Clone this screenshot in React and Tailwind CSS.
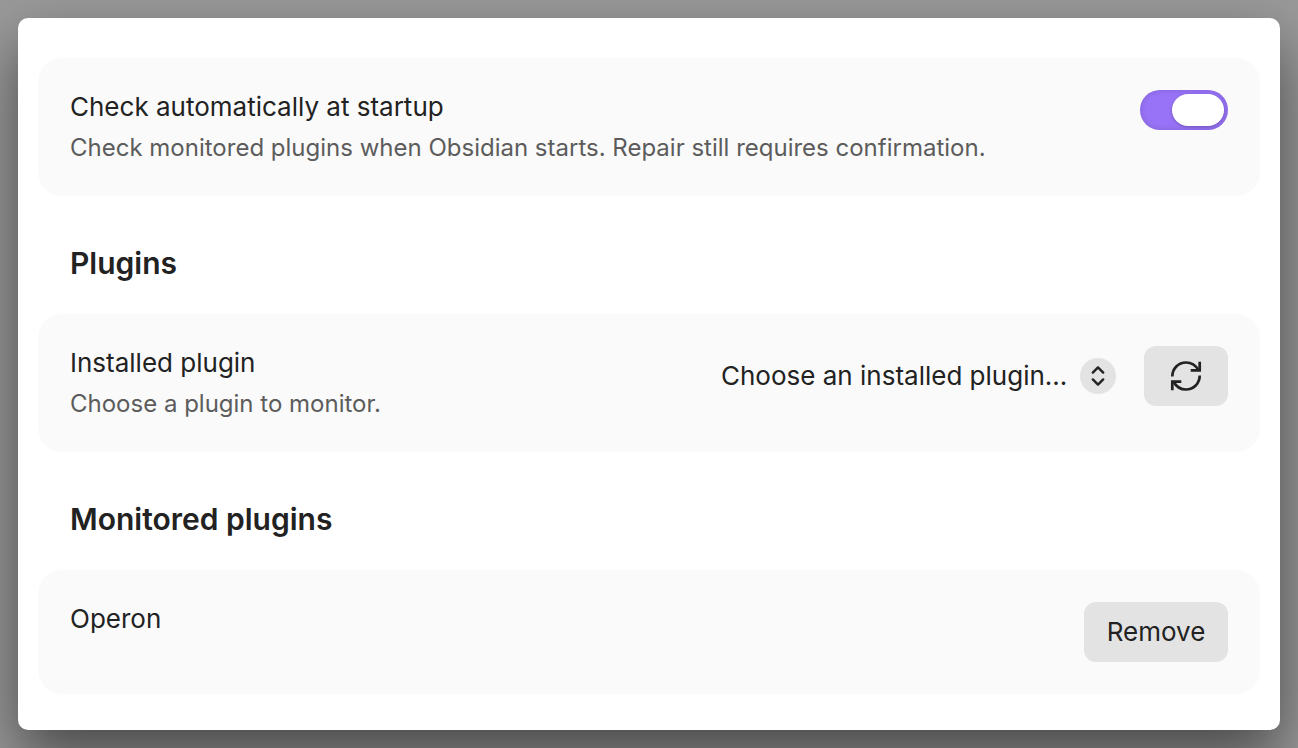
import { useState } from "react";

const plugins = [{ id: "operon", name: "Operon" }];

function Card({ children }) {
  return (
    <div className="flex items-start justify-between gap-7 rounded-3xl bg-[#fafafa] p-8">
      {children}
    </div>
  );
}

export default function App() {
  const [enabled, setEnabled] = useState(true);

  return (
    <div className="min-h-screen bg-[#999999] p-[18px] font-['Inter',sans-serif] text-[26px] leading-[34px] text-[#222222]">
      <main className="rounded-[10px] bg-white px-5 pt-10 pb-9 shadow-[0_28px_60px_rgba(0,0,0,0.52)]">
        {/* STARTUP */}
        <Card>
          <div>
            <label htmlFor="startup" className="block">
              Check automatically at startup
            </label>
            <p className="mt-2 text-2xl leading-[32px] text-[#5c5c5c]">
              Check monitored plugins when Obsidian starts. Repair still
              requires confirmation.
            </p>
          </div>
          <input
            id="startup"
            type="checkbox"
            checked={enabled}
            onChange={(e) => setEnabled(e.target.checked)}
            className="h-10 w-[88px] shrink-0 appearance-none rounded-full bg-gray-300 p-1 shadow-[inset_0_0_6px_rgba(0,0,0,0.15)] before:block before:h-8 before:w-[52px] before:rounded-full before:bg-white before:shadow-[0_1px_3px_rgba(0,0,0,0.25)] checked:bg-[#9873f7] checked:before:ml-7"
          />
        </Card>

        {/* PLUGINS */}
        <h2 className="mt-12 mb-8 px-8 text-[30px] leading-[38px] font-semibold">
          Plugins
        </h2>
        <Card>
          <div>
            <label htmlFor="plugin" className="block">
              Installed plugin
            </label>
            <p className="mt-2 text-2xl leading-[32px] text-[#5c5c5c]">
              Choose a plugin to monitor.
            </p>
          </div>
          <div className="flex items-center gap-7">
            <div className="grid items-center">
              <select
                id="plugin"
                className="col-start-1 row-start-1 h-[60px] appearance-none bg-transparent pr-12"
              >
                <option>Choose an installed plugin...</option>
              </select>
              <span className="pointer-events-none col-start-1 row-start-1 flex size-9 items-center justify-center justify-self-end rounded-full bg-[#e3e3e3]">
                <svg
                  viewBox="0 0 36 36"
                  className="size-9 fill-none stroke-[#222222] stroke-[2.4]"
                  strokeLinecap="round"
                  strokeLinejoin="round"
                >
                  <path d="M12.8 14.6 18 9.4l5.2 5.2M12.8 21.4 18 26.6l5.2-5.2" />
                </svg>
              </span>
            </div>
            <button
              aria-label="Refresh"
              className="flex h-[60px] w-[84px] items-center justify-center rounded-xl bg-[#e3e3e3]"
            >
              <svg
                viewBox="0 0 36 36"
                className="size-9 fill-none stroke-current stroke-[2.7]"
              >
                <path d="M4.3 18.5C4.3 10.5 10.4 4.5 18 4.5c5.4 0 9.8 3 12.3 7.5M31.7 17.5c0 8-6.1 14-13.7 14-5.4 0-9.8-3-12.3-7.5" />
                <path d="M31.7 3.7v8.6h-9M4.3 32.3v-8.6h9" />
              </svg>
            </button>
          </div>
        </Card>

        {/* MONITORED */}
        <h2 className="mt-12 mb-8 px-8 text-[30px] leading-[38px] font-semibold">
          Monitored plugins
        </h2>
        {plugins.map((plugin) => (
          <Card key={plugin.id}>
            <h3>{plugin.name}</h3>
            <button className="h-[60px] w-36 rounded-xl bg-[#e3e3e3]">
              Remove
            </button>
          </Card>
        ))}
      </main>
    </div>
  );
}
